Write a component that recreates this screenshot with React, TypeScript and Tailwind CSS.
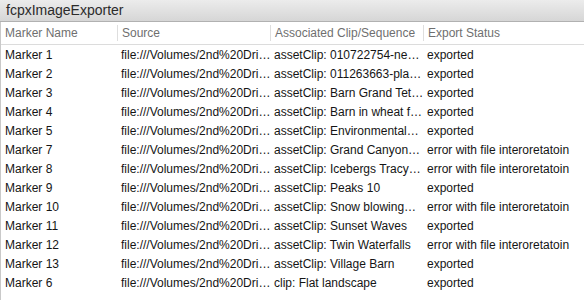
const rows: [string, string, string][] = [
  ['Marker 1', 'assetClip: 010722754-ne…', 'exported'],
  ['Marker 2', 'assetClip: 011263663-pla…', 'exported'],
  ['Marker 3', 'assetClip: Barn Grand Tet…', 'exported'],
  ['Marker 4', 'assetClip: Barn in wheat f…', 'exported'],
  ['Marker 5', 'assetClip: Environmental…', 'exported'],
  ['Marker 7', 'assetClip: Grand Canyon…', 'error with file interoretatoin'],
  ['Marker 8', 'assetClip: Icebergs Tracy…', 'error with file interoretatoin'],
  ['Marker 9', 'assetClip: Peaks 10', 'exported'],
  ['Marker 10', 'assetClip: Snow blowing…', 'error with file interoretatoin'],
  ['Marker 11', 'assetClip: Sunset Waves', 'exported'],
  ['Marker 12', 'assetClip: Twin Waterfalls', 'error with file interoretatoin'],
  ['Marker 13', 'assetClip: Village Barn', 'exported'],
  ['Marker 6', 'clip: Flat landscape', 'exported'],
];

const source = 'file:///Volumes/2nd%20Dri…';

export default function App() {
  return (
    <div className="flex h-[300px] w-[584px] flex-col overflow-hidden bg-white font-['Liberation_Sans',Arial,sans-serif] text-[12px]">
      <div className="flex h-[22px] shrink-0 items-center border-b border-[#b1b1b1] bg-gradient-to-b from-[#ececec] to-[#d6d6d6] pl-[6px] text-[14px] text-[#2b2b2b]">
        fcpxImageExporter
      </div>

      <div className="flex flex-1 flex-col border-l border-[#c9c9c9]">
        <div className="grid h-[23px] shrink-0 grid-cols-[116px_153px_153px_1fr] items-center border-b border-[#dcdcdc] text-[#6f6f6f]">
          <div className="pl-[4px]">Marker Name</div>
          <div className="flex h-[16px] items-center border-l border-[#dedede] pl-[4px]">Source</div>
          <div className="flex h-[16px] items-center border-l border-[#dedede] pl-[4px]">Associated Clip/Sequence</div>
          <div className="flex h-[16px] items-center border-l border-[#dedede] pl-[4px]">Export Status</div>
        </div>

        {rows.map(([name, clip, status]) => (
          <div key={name} className="grid h-[19px] grid-cols-[116px_153px_153px_1fr] items-center text-[#151515]">
            <div className="pl-[4px]">{name}</div>
            <div className="whitespace-nowrap pl-[4px]">{source}</div>
            <div className="whitespace-nowrap pl-[4px]">{clip}</div>
            <div className="whitespace-nowrap pl-[4px]">{status}</div>
          </div>
        ))}
      </div>
    </div>
  );
}
